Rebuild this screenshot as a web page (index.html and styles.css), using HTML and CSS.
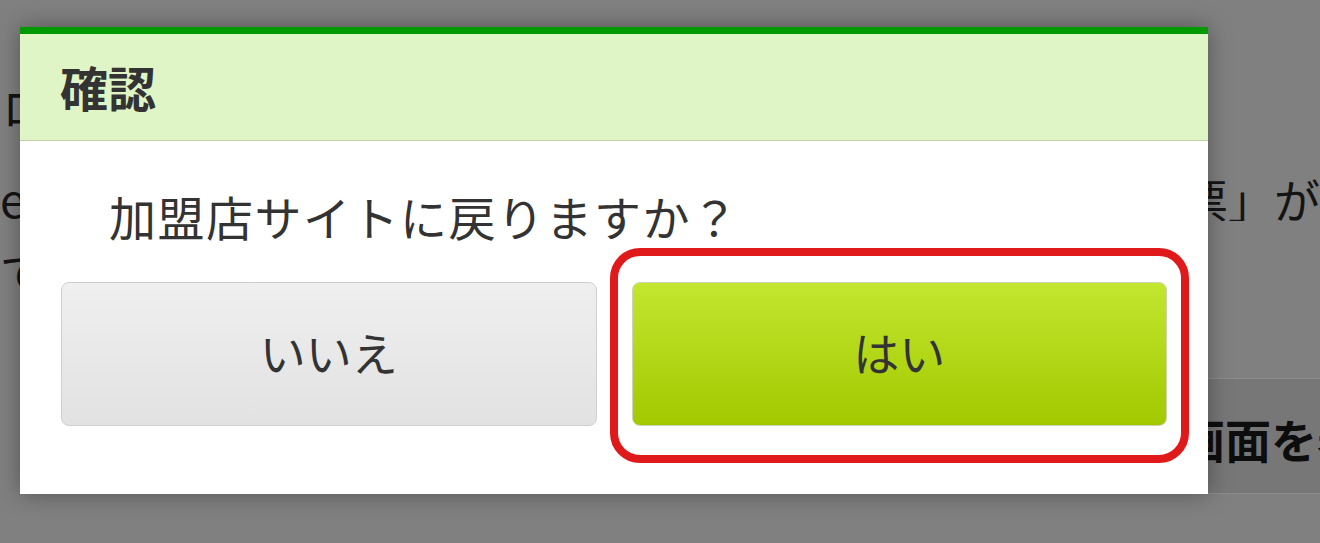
FILE: index.html
```html
<!DOCTYPE html>
<html lang="ja">
<head>
    <meta charset="UTF-8">
    <meta name="viewport" content="width=device-width, initial-scale=1.0">
    <title>確認</title>
    <link rel="stylesheet" href="styles.css">
</head>
<body>
    <div class="page">
        <p class="line first">ログインしてください</p>
        <div class="line split">
            <span class="left">eチケットの購入後に</span>
            <span class="right">伝票」が</span>
        </div>
        <p class="line">でご確認いただけます</p>
        <div class="page-button">
            <span>購入画面を表示</span>
        </div>
    </div>

    <div class="dialog">
        <div class="dialog-header">
            <h1>確認</h1>
        </div>
        <div class="dialog-body">
            <p class="message">加盟店サイトに戻りますか？</p>
            <div class="buttons">
                <button class="btn btn-no" type="button">いいえ</button>
                <button class="btn btn-yes" type="button">はい</button>
            </div>
        </div>
    </div>

    <!-- annotation around the yes button -->
    <div class="highlight"></div>
</body>
</html>
```

FILE: styles.css
```css
body {
    margin: 0;
    width: 1320px;
    height: 543px;
    overflow: hidden;
    background-color: #808080;
    font-family: "Noto Sans CJK JP", "Noto Sans", sans-serif;
    color: #333;
}

/* page behind the overlay */
.page {
    color: #141414;
    font-size: 46px;
}

.line {
    margin: 0;
    height: 46px;
    line-height: 46px;
    white-space: nowrap;
    overflow: hidden;
}

.line.first {
    margin-top: 82px;
    padding-left: 2px;
}

.line.split {
    display: flex;
    margin-top: 47px;
    margin-bottom: 26px;
}

.split .left {
    width: 1164px;
    overflow: hidden;
}

.page-button {
    margin: 85px 0 0 1003px;
    height: 116px;
    background-color: #777;
    border-top: 1px solid #8c8c8c;
    border-bottom: 1px solid #8c8c8c;
    display: flex;
    align-items: center;
    padding: 4px 0 0 84px;
    box-sizing: border-box;
    font-weight: bold;
    white-space: nowrap;
    overflow: hidden;
    color: #0d0d0d;
}

/* dialog */
.dialog {
    position: absolute;
    left: 20px;
    top: 27px;
    width: 1188px;
    height: 467px;
    background: #fff;
    border-top: 7px solid #009a00;
    box-sizing: border-box;
    box-shadow: 0 0 22px rgba(0, 0, 0, 0.35);
}

.dialog-header {
    height: 107px;
    background-color: #dff5c5;
    border-bottom: 1px solid #c6cbab;
    box-sizing: border-box;
    display: flex;
    align-items: center;
    padding: 0 0 2px 40px;
}

.dialog-header h1 {
    margin: 0;
    font-size: 48px;
    font-weight: bold;
    color: #333;
    line-height: 1;
}

.dialog-body {
    padding: 0 41px;
}

.message {
    margin: 0;
    padding: 45px 0 0 48px;
    font-size: 47px;
    line-height: 60px;
    color: #333;
    letter-spacing: 1.5px;
}

.buttons {
    display: flex;
    gap: 35px;
    margin-top: 36px;
}

.btn {
    flex: 1;
    height: 144px;
    padding: 0 0 6px;
    border: 1px solid #cfcfcf;
    border-radius: 8px;
    font-family: "Noto Sans CJK JP", "Noto Sans", sans-serif;
    font-size: 46px;
    color: #333;
    cursor: pointer;
}

.btn-no {
    background: linear-gradient(#efefef, #e2e2e2);
}

.btn-yes {
    background: linear-gradient(#c3e62f, #a2c900);
    border-color: #cdd3b6;
}

.highlight {
    position: absolute;
    left: 610px;
    top: 248px;
    width: 579px;
    height: 215px;
    border: 8px solid #e01a1a;
    border-radius: 30px;
    box-sizing: border-box;
}
```
